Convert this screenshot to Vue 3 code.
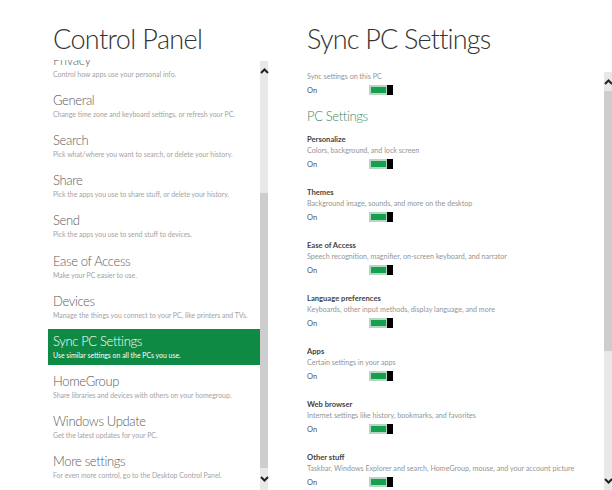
<script setup>
const items = [
  { t: 'Privacy', d: 'Control how apps use your personal info.' },
  { t: 'General', d: 'Change time zone and keyboard settings, or refresh your PC.' },
  { t: 'Search', d: 'Pick what/where you want to search, or delete your history.' },
  { t: 'Share', d: 'Pick the apps you use to share stuff, or delete your history.' },
  { t: 'Send', d: 'Pick the apps you use to send stuff to devices.' },
  { t: 'Ease of Access', d: 'Make your PC easier to use.' },
  { t: 'Devices', d: 'Manage the things you connect to your PC, like printers and TVs.' },
  { t: 'Sync PC Settings', d: 'Use similar settings on all the PCs you use.', on: true },
  { t: 'HomeGroup', d: 'Share libraries and devices with others on your homegroup.' },
  { t: 'Windows Update', d: 'Get the latest updates for your PC.' },
  { t: 'More settings', d: 'For even more control, go to the Desktop Control Panel.' },
]
const settings = [
  { t: 'Personalize', d: 'Colors, background, and lock screen' },
  { t: 'Themes', d: 'Background image, sounds, and more on the desktop' },
  { t: 'Ease of Access', d: 'Speech recognition, magnifier, on-screen keyboard, and narrator' },
  { t: 'Language preferences', d: 'Keyboards, other input methods, display language, and more' },
  { t: 'Apps', d: 'Certain settings in your apps' },
  { t: 'Web browser', d: 'Internet settings like history, bookmarks, and favorites' },
  { t: 'Other stuff', d: 'Taskbar, Windows Explorer and search, HomeGroup, mouse, and your account picture' },
]
</script>

<template>
  <div class="page">
    <section class="left">
      <h1 class="title">Control Panel</h1>
      <div class="listwrap">
        <div class="list">
          <div class="inner">
            <div v-for="i in items" :key="i.t" class="item" :class="{ on: i.on }">
              <div class="it">{{ i.t }}</div>
              <div class="id">{{ i.d }}</div>
            </div>
          </div>
        </div>
        <div class="sb lsb">
          <div class="arrow">
            <svg width="9" height="6" viewBox="0 0 9 6"><path d="M1 5L4.500 1.500L8 5" fill="none" stroke="#222" stroke-width="2"/></svg>
          </div>
          <div class="gap"></div>
          <div class="thumb"></div>
          <div class="arrow">
            <svg width="9" height="6" viewBox="0 0 9 6"><path d="M1 1L4.500 4.500L8 1" fill="none" stroke="#222" stroke-width="2"/></svg>
          </div>
        </div>
      </div>
    </section>
    <section class="right">
      <h1 class="title rtitle">Sync PC Settings</h1>
      <div class="rbody">
        <div class="content">
          <div class="sd first">Sync settings on this PC</div>
          <div class="row">
            <span class="on-l">On</span>
            <span class="toggle"><span class="fill"></span><span class="knob"></span></span>
          </div>
          <h2 class="sub">PC Settings</h2>
          <div v-for="s in settings" :key="s.t" class="setting">
            <div class="st">{{ s.t }}</div>
            <div class="sd">{{ s.d }}</div>
            <div class="row">
              <span class="on-l">On</span>
              <span class="toggle"><span class="fill"></span><span class="knob"></span></span>
            </div>
          </div>
        </div>
        <div class="sb rsb">
          <div class="arrow">
            <svg width="9" height="6" viewBox="0 0 9 6"><path d="M1 5L4.500 1.500L8 5" fill="none" stroke="#222" stroke-width="2"/></svg>
          </div>
          <div class="thumb"></div>
          <div class="gap"></div>
          <div class="arrow">
            <svg width="9" height="6" viewBox="0 0 9 6"><path d="M1 1L4.500 4.500L8 1" fill="none" stroke="#222" stroke-width="2"/></svg>
          </div>
        </div>
      </div>
    </section>
  </div>
</template>

<style>
html, body { margin: 0; background: #fff; }
</style>

<style scoped>
.page {
  width: 612px;
  height: 490px;
  overflow: hidden;
  display: flex;
  background: #fff;
  font-family: Lato, "Open Sans", "Liberation Sans", sans-serif;
  color: #333;
}
.left { width: 220px; margin-left: 48px; flex: none; display: flex; flex-direction: column; }
.title {
  margin: 0;
  padding: 21px 0 0 5px;
  height: 39px;
  font-size: 27px;
  letter-spacing: -0.6px;
  line-height: 36px;
  font-weight: 300;
  color: #333;
  white-space: nowrap;
}
.listwrap { flex: 1; display: flex; min-height: 0; }
.list { width: 212px; overflow: hidden; flex: none; }
.inner { margin-top: -12.4px; }
.item { height: 36px; margin-bottom: 4.2px; padding: 0 5px; white-space: nowrap; overflow: hidden; }
.it { font-size: 13px; letter-spacing: -0.35px; line-height: 17px; color: #5c5c5c; font-weight: 300; padding-top: 4px; }
.id { font-size: 6.9px; line-height: 11px; color: #a3a3a3; }
.item.on { background: #0f8a45; }
.item.on .it, .item.on .id { color: #fff; }
.sb { width: 8px; flex: none; display: flex; flex-direction: column; background: #e8e8e8; }
.arrow { height: 20px; flex: none; display: flex; align-items: center; justify-content: center; }
.arrow svg { flex: none; }
.lsb { margin-top: 1px; }
.lsb .gap { height: 112px; flex: none; }
.lsb .thumb { height: 275px; flex: none; background: #cdcdcd; }
.lsb .arrow:last-child { flex: 1; }
.right { flex: 1; min-width: 0; margin-left: 39px; display: flex; flex-direction: column; }
.rtitle { padding-left: 0; letter-spacing: -0.8px; }
.rbody { flex: 1; display: flex; min-height: 0; }
.content { width: 297px; flex: none; overflow: hidden; padding-top: 11px; white-space: nowrap; }
.rsb { margin-top: 12px; height: 418px; }
.rsb .arrow { height: 19px; }
.rsb .thumb { height: 260px; flex: none; background: #cdcdcd; }
.rsb .gap { flex: 1; }
.sd { font-size: 7.15px; line-height: 11px; color: #959595; height: 11px; }
.st { font-size: 7.6px; line-height: 11px; font-weight: 700; color: #444; height: 11px; }
.row { display: flex; align-items: center; height: 15px; }
.on-l { width: 62px; font-size: 7.5px; line-height: 11px; padding-top: 2px; color: #555; }
.toggle { width: 24px; height: 10px; display: flex; background: #b5d6c0; }
.fill { width: 15px; height: 6px; margin: 2px 0 0 2px; background: #14a04f; }
.knob { width: 6px; height: 10px; margin-left: 1px; background: #000; }
.sub { margin: 10px 0 9px; font-size: 13px; letter-spacing: -0.35px; line-height: 18px; font-weight: 300; color: #3f8a67; }
.setting { height: 53px; }
</style>
